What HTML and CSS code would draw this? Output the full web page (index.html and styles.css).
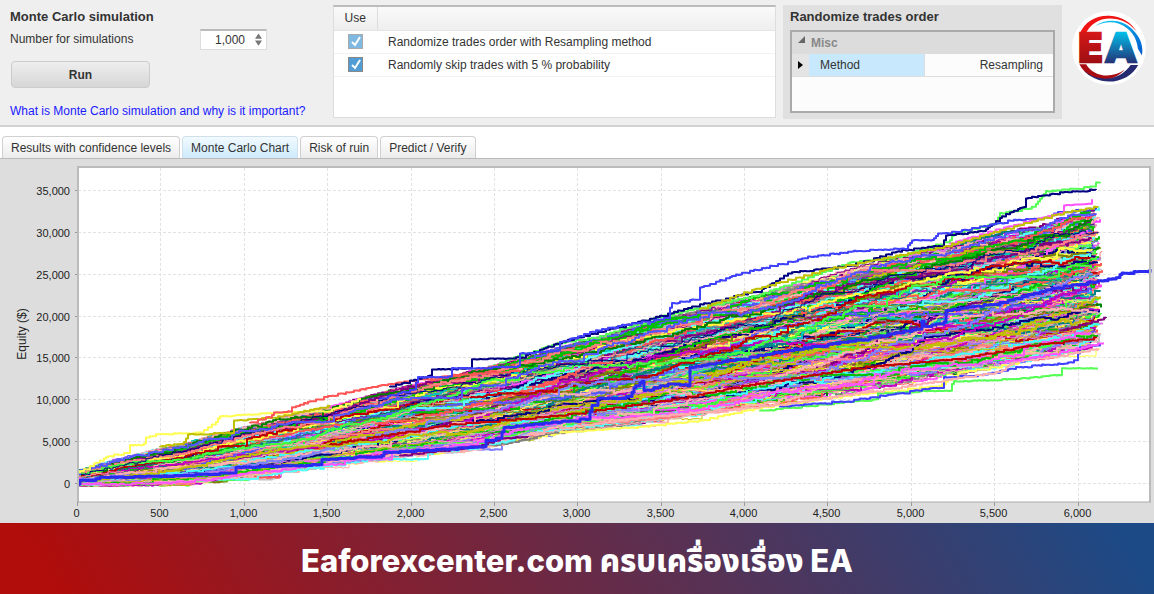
FILE: index.html
```html
<!DOCTYPE html>
<html lang="th">
<head>
    <meta charset="UTF-8">
    <meta name="viewport" content="width=device-width, initial-scale=1.0">
    <title>Monte Carlo simulation</title>
    <link rel="stylesheet" href="styles.css">
</head>
<body>
    <header class="top">
        <section class="settings">
            <h1>Monte Carlo simulation</h1>
            <div class="field">
                <label for="simulations">Number for simulations</label>
                <div class="spinner">
                    <input type="text" id="simulations" value="1,000">
                    <svg width="7" height="13" viewBox="0 0 8 14"><path d="M4 0L8 6H0zM4 14L8 8H0z" fill="#777"/></svg>
                </div>
            </div>
            <button class="run" type="button">Run</button>
            <a href="#">What is Monte Carlo simulation and why is it important?</a>
        </section>

        <div class="methods">
            <table>
                <thead>
                    <tr><th class="use">Use</th><th></th></tr>
                </thead>
                <tbody>
                    <tr>
                        <td class="use"><input type="checkbox" id="resample" class="light" checked></td>
                        <td><label for="resample">Randomize trades order with Resampling method</label></td>
                    </tr>
                    <tr>
                        <td class="use"><input type="checkbox" id="skip" checked></td>
                        <td><label for="skip">Randomly skip trades with 5 % probability</label></td>
                    </tr>
                </tbody>
            </table>
        </div>

        <section class="order">
            <h2>Randomize trades order</h2>
            <div class="props">
                <div class="group"><svg width="8" height="8" viewBox="0 0 8 8"><path d="M7 0V7H0z" fill="#666"/></svg>Misc</div>
                <div class="prop">
                    <span class="mark"><svg width="5" height="8" viewBox="0 0 5 8"><path d="M0 0L5 4L0 8z"/></svg></span>
                    <span class="name">Method</span>
                    <span class="value">Resampling</span>
                </div>
            </div>
        </section>

        <svg class="logo" viewBox="0 0 220 220" role="img" aria-label="EA">
            <defs>
                <linearGradient id="red" x1="0" y1="0" x2="0" y2="1"><stop offset="0" stop-color="#e01a1a"/><stop offset="1" stop-color="#8e0c10"/></linearGradient>
                <linearGradient id="blue" x1="0" y1="0" x2="0" y2="1"><stop offset="0.1" stop-color="#00c4ee"/><stop offset="0.85" stop-color="#262a70"/></linearGradient>
                <linearGradient id="sky" x1="0" y1="0" x2="1" y2="1"><stop offset="0" stop-color="#10d0f0"/><stop offset="1" stop-color="#0058d0"/></linearGradient>
            </defs>
            <circle cx="110" cy="110" r="110" fill="#fff"/>
            <path d="M22 70C38 28 76 12 112 14C148 16 178 36 193 62C172 34 142 22 112 22C80 22 52 40 40 70z" fill="#f01414"/>
            <path d="M68 45C104 20 152 26 180 55C203 78 213 104 208 132L196 112C192 76 172 50 140 38C116 30 92 34 68 45z" fill="url(#sky)"/>
            <path d="M22 158H42C62 194 116 204 157 174C128 206 92 210 64 197C44 188 30 174 22 158z" fill="#a80c12"/>
            <path d="M30 172C64 210 138 216 176 158H198C168 218 78 230 30 172z" fill="#262a70"/>
            <text class="letter" x="15" y="153" fill="url(#red)" stroke="url(#red)">E</text>
            <text class="letter halo" x="100" y="153">A</text>
            <text class="letter" x="100" y="153" fill="url(#blue)" stroke="url(#blue)">A</text>
        </svg>
    </header>

    <nav class="tabs">
        <button type="button">Results with confidence levels</button>
        <button type="button" class="active">Monte Carlo Chart</button>
        <button type="button">Risk of ruin</button>
        <button type="button">Predict / Verify</button>
    </nav>

    <main class="chart">
        <svg id="chart" viewBox="0 159 1154 364">
            <rect x="78" y="167" width="1072" height="335" fill="#fff"/>
            <g id="grid"></g>
            <g id="lines" fill="none" stroke-width="2" stroke-linejoin="round"></g>
            <path d="M78 502V167H1150V502" fill="none" stroke="#bbb" stroke-width="2"/>
            <path d="M77 502H1151" stroke="#aaa"/>
            <g id="labels"></g>
            <text class="axis" text-anchor="middle" transform="translate(26 334) rotate(-90)">Equity ($)</text>
        </svg>
    </main>

    <footer>Eaforexcenter.com ครบเครื่องเรื่อง EA</footer>

    <script src="chart.js"></script>
</body>
</html>
```
FILE: styles.css
```css
*{
    box-sizing: border-box;
}

body{
    margin: 0;
    background: #fff;
    color: #333;
    font-family: "Liberation Sans", Arial, sans-serif;
    font-size: 12px;
}

h1, h2{
    margin: 0;
    font-size: 13px;
    line-height: 16px;
}

.top{
    display: flex;
    align-items: flex-start;
    height: 127px;
    padding: 5px 8px 0 10px;
    background: #efefef;
    border-bottom: 2px solid #d2d2d2;
}

.settings{
    display: flex;
    flex-direction: column;
    align-items: flex-start;
    width: 323px;
    padding-top: 4px;
}

.field{
    display: flex;
    align-items: center;
    justify-content: space-between;
    width: 257px;
    height: 28px;
}

.spinner{
    display: flex;
    align-items: center;
    width: 67px;
    height: 21px;
    padding-right: 4px;
    background: #fff;
    border: 1px solid #ddd;
    border-top: 2px solid #bbb;
}

.spinner input{
    flex: 1;
    min-width: 0;
    padding: 0 10px 0 0;
    border: 0;
    background: none;
    color: #333;
    font: inherit;
    text-align: right;
}

.run{
    width: 139px;
    height: 27px;
    margin: 8px 0 14px 1px;
    border: 1px solid #ccc;
    border-radius: 4px;
    background: linear-gradient(#eee, #d6d6d6);
    color: #333;
    font: bold 12px "Liberation Sans", Arial, sans-serif;
}

.settings a{
    color: #1a1aff;
    line-height: 18px;
    text-decoration: none;
    white-space: nowrap;
}

.methods{
    flex: 1;
    height: 113px;
    background: #fff;
    border: 1px solid #ddd;
    border-top: 2px solid #bbb;
}

.methods table{
    width: 100%;
    border-collapse: collapse;
}

.methods th{
    height: 23px;
    padding: 0;
    background: linear-gradient(#fafafa, #eee);
    border-bottom: 1px solid #e4e4e4;
    font-weight: normal;
}

.methods td{
    height: 23px;
    padding: 0 0 0 11px;
    border-bottom: 1px solid #f2f2f2;
}

.methods .use{
    width: 43px;
    padding: 0;
    text-align: center;
}

.methods th.use{
    border-right: 1px solid #ddd;
}

.methods input{
    appearance: none;
    display: block;
    width: 15px;
    height: 15px;
    margin: 0 auto;
    border: 1px solid #888;
    background: url("data:image/svg+xml,%3Csvg xmlns='http://www.w3.org/2000/svg' viewBox='0 0 13 13'%3E%3Cpath d='M3 7l3 3l5-8' fill='none' stroke='white' stroke-width='2'/%3E%3C/svg%3E") #4f9dd4;
}

.methods input.light{
    border-color: #aaa;
    background-color: #7fb9e2;
}

.order{
    width: 279px;
    height: 114px;
    margin-left: 7px;
    padding: 4px 7px;
    background: #e0e0e0;
}

.order h2{
    margin-bottom: 5px;
}

.props{
    height: 83px;
    background: #fcfcfc;
    border: 2px solid #aaa;
}

.group{
    height: 22px;
    padding-left: 6px;
    background: #dcdcdc;
    color: #888;
    font-size: 12px;
    font-weight: bold;
    line-height: 22px;
}

.group svg{
    margin-right: 5px;
    vertical-align: 3px;
}

.prop{
    display: flex;
    height: 23px;
    border-bottom: 1px solid #ddd;
    line-height: 22px;
}

.mark{
    width: 17px;
    padding-left: 6px;
    background: #e4e4e4;
}

.name{
    width: 116px;
    padding-left: 11px;
    background: #c8e9fd;
    border-right: 1px solid #ddd;
}

.value{
    flex: 1;
    padding-right: 10px;
    text-align: right;
}

.logo{
    width: 74px;
    height: 74px;
    margin: 6px 0 0 10px;
}

.letter{
    font: bold 116px "DejaVu Sans", sans-serif;
    stroke-width: 8;
}

.halo{
    fill: #fff;
    stroke: #fff;
    stroke-width: 18;
}

.tabs{
    display: flex;
    align-items: flex-end;
    gap: 2px;
    height: 32px;
    padding: 0 2px;
    border-bottom: 1px solid #bbb;
}

.tabs button{
    height: 22px;
    padding: 0 8px;
    border: 1px solid #d0d0d0;
    border-bottom: 0;
    border-radius: 4px 4px 0 0;
    background: linear-gradient(#fff, #ececec);
    color: #333;
    font: inherit;
}

.tabs .active{
    border-color: #cfe0ea;
    background: linear-gradient(#f2faff, #cdeafb);
}

.chart{
    background: #ddd;
}

.chart svg{
    display: block;
    width: 100%;
}

.chart text{
    fill: #222;
    font-size: 11px;
}

.chart .axis{
    font-size: 12px;
}

footer{
    height: 71px;
    background: linear-gradient(60deg, #b00d0b 5%, #1c4a86 97%);
    color: #fff;
    font: 800 31px/75px Inter, "Noto Sans Thai", sans-serif;
    text-align: center;
    white-space: nowrap;
}
```
FILE: chart.js
```js
var SVG = 'http://www.w3.org/2000/svg';
var grid = document.getElementById('grid');
var lines = document.getElementById('lines');
var labels = document.getElementById('labels');

var colors = ['#ff5555', '#55ff55', '#ffff55', '#ff55ff', '#55ffff', '#ffafaf', '#00c000',
    '#808080', '#c00000', '#5555ff', '#c0c000', '#c000c0', '#00c0c0', '#ff5555', '#40ffff',
    '#ffff40', '#ff40ff', '#40ff40', '#c0c0c0', '#000080', '#008000', '#808000', '#800080',
    '#008080', '#ff8080', '#ffff55', '#55ffff', '#e070e0', '#ffafaf', '#8080ff', '#00c000'];

// fixed seed, the runs look the same on every load
var seed = 77;
function random(){
    seed = (seed * 16807) % 2147483647;
    return seed / 2147483647;
}

function add(parent, name, attrs, text){
    var el = document.createElementNS(SVG, name);
    for(var key in attrs){
        el.setAttribute(key, attrs[key]);
    }
    if(text){
        el.textContent = text;
    }
    parent.appendChild(el);
}

// grid and axis values
for(var v = 0; v <= 6000; v += 500){
    var gx = Math.round(77 + v * 0.16675) + 0.5;
    add(grid, 'path', {d: 'M' + gx + ' 168V502', stroke: '#e2e2e2', 'stroke-dasharray': '3 2'});
    add(grid, 'path', {d: 'M' + gx + ' 502v4', stroke: '#999'});
    add(labels, 'text', {x: gx - 1, y: 517, 'text-anchor': 'middle'}, v.toLocaleString('en-US'));
}
for(var v = 0; v <= 35000; v += 5000){
    var gy = Math.round(483 - v * 0.00837) + 0.5;
    add(grid, 'path', {d: 'M78 ' + gy + 'H1150', stroke: '#e2e2e2', 'stroke-dasharray': '3 2'});
    add(grid, 'path', {d: 'M75 ' + gy + 'h3', stroke: '#999'});
    add(labels, 'text', {x: 70, y: gy + 4, 'text-anchor': 'end'}, v.toLocaleString('en-US'));
}

function at(points, x){
    for(var i = 1; i < points.length; i++){
        if(x <= points[i][0]){
            var a = points[i - 1], b = points[i];
            return a[1] + (b[1] - a[1]) * (x - a[0]) / (b[0] - a[0] || 1);
        }
    }
    return points[points.length - 1][1];
}

// stepped line through the points
function follow(points, color, width){
    var y = points[0][1];
    var d = 'M' + points[0][0] + ' ' + y;
    var end = points[points.length - 1][0];
    for(var x = points[0][0]; x <= end; x += 2){
        var next = at(points, x);
        if(Math.abs(next - y) > 0.5 + random() * 2){
            y = next;
        }
        d += 'H' + x + 'V' + (y + random() * 0.6).toFixed(1);
    }
    add(lines, 'path', {d: d, stroke: color, 'stroke-width': width || 2});
}

var top1 = [[78, 470], [128, 456], [180, 445], [240, 428], [330, 407], [410, 386], [500, 365], [610, 335], [700, 311], [760, 296], [860, 268], [950, 247], [1030, 228], [1105, 208]];
var bottom1 = [[78, 485], [180, 483], [250, 475], [330, 464], [410, 454], [480, 446], [560, 430], [700, 412], [850, 391], [950, 372], [1030, 358], [1105, 344]];

for(var i = 0; i < 620; i++){
    var t = 0.03 + random() * 0.94;
    var freq = 0.004 + random() * 0.012;
    var phase = random() * 6.3;
    var end = 1090 + random() * random() * 14;
    var y = 470 + random() * 14;
    var jump = 1 + random() * 3;
    var walk = 0;
    var d = 'M78 ' + y.toFixed(1);
    for(var x = 80; x < end; x += 1 + Math.floor(random() * 4)){
        walk = walk * 0.97 + (random() - 0.5) * 0.03;
        var room = 0.3 * Math.min(t, 1 - t) + 0.02;
        var k = t + room * Math.sin(x * freq + phase) + walk;
        k = Math.max(-0.02, Math.min(1.02, k));
        var next = at(top1, x) * (1 - k) + at(bottom1, x) * k;
        if(y - next > jump || next - y > 2){
            y = next;
            jump = random() < 0.03 ? 3 + random() * 4 : random() * 1.5;
        }
        d += 'H' + x + 'V' + (y + random() * 1.2).toFixed(1);
    }
    add(lines, 'path', {d: d, stroke: colors[Math.floor(random() * colors.length)], 'stroke-width': i % 3 ? 2 : 1});
}

// runs at the edges of the bundle
follow([[78, 472], [110, 455], [128, 452], [129, 445], [145, 443], [146, 437], [156, 434], [200, 432], [217, 421], [219, 416], [260, 413], [330, 410], [360, 398]], '#ffff55');
follow([[160, 446], [184, 442], [188, 434], [232, 432], [234, 420], [280, 416], [330, 405]], '#c0c000');
follow([[250, 422], [272, 415], [274, 412], [290, 411], [292, 407], [310, 401], [330, 395], [380, 385], [410, 380], [450, 375], [520, 370]], '#ff5555');
follow([[500, 362], [535, 350], [560, 342], [600, 336], [660, 316], [760, 294], [850, 262], [900, 256], [950, 240], [953, 233], [995, 223], [1000, 213], [1034, 206], [1046, 191], [1094, 186], [1096, 182], [1100, 182]], '#55ff55');
follow([[390, 386], [430, 375], [431, 369], [449, 369], [471, 367], [472, 359], [520, 357], [560, 342], [600, 331], [655, 317], [700, 304], [760, 290], [790, 272], [850, 265], [900, 250], [943, 245], [945, 235], [985, 230], [1003, 215], [1024, 206], [1025, 198], [1060, 192], [1097, 189]], '#000080');
follow([[380, 398], [415, 388], [417, 377], [450, 376], [452, 368], [518, 366], [520, 353], [558, 350], [560, 342], [592, 331], [620, 325], [668, 317], [671, 303], [698, 298], [700, 287], [740, 273], [810, 256], [860, 250], [905, 248], [912, 240], [935, 238], [937, 233], [950, 232], [980, 226], [1010, 220], [1050, 217], [1055, 212], [1097, 208]], '#4040ff');
follow([[950, 243], [1000, 228], [1062, 212], [1063, 205], [1090, 203], [1092, 199]], '#ff55ff');
follow([[700, 308], [750, 290], [830, 268], [940, 247], [1000, 230], [1060, 213], [1098, 206]], '#c0c000');
follow([[560, 432], [640, 426], [700, 420], [760, 407], [830, 397], [940, 385], [960, 372], [1020, 362]], '#ffff55');
follow([[760, 410], [850, 401], [876, 399], [878, 393], [950, 389], [953, 381], [1020, 378], [1060, 374], [1062, 368], [1098, 368]], '#55ff55');
follow([[780, 406], [850, 400], [942, 386], [944, 377], [985, 374], [1020, 366], [1065, 363], [1077, 359], [1079, 347], [1100, 343]], '#4040ff');
follow([[560, 428], [640, 417], [780, 404], [905, 386], [1000, 371], [1016, 360], [1050, 357], [1098, 348]], '#ffafaf');
follow([[1000, 362], [1050, 354], [1104, 342]], '#ff55ff');
follow([[1060, 330], [1090, 322], [1106, 317]], '#800080');
follow([[330, 444], [450, 424], [560, 415], [680, 398], [740, 386], [860, 367], [960, 358], [1030, 345], [1097, 337]], '#c00000');
follow([[400, 455], [481, 445], [500, 438], [529, 436]], '#800080');

// the original strategy
follow([[78, 484], [80, 480], [95, 480], [97, 477], [180, 475], [234, 472], [236, 467], [320, 464], [322, 459], [382, 455], [384, 452], [484, 446], [486, 440], [501, 437], [503, 427], [589, 418], [591, 405], [596, 405], [598, 398], [631, 396], [633, 388], [642, 381], [644, 390], [670, 383], [688, 386], [690, 367], [730, 360], [800, 348], [860, 339], [920, 328], [922, 321], [924, 326], [944, 322], [946, 310], [1000, 302], [1055, 287], [1100, 280], [1118, 277], [1121, 273], [1150, 269]], '#2a2af0', 3);
```
